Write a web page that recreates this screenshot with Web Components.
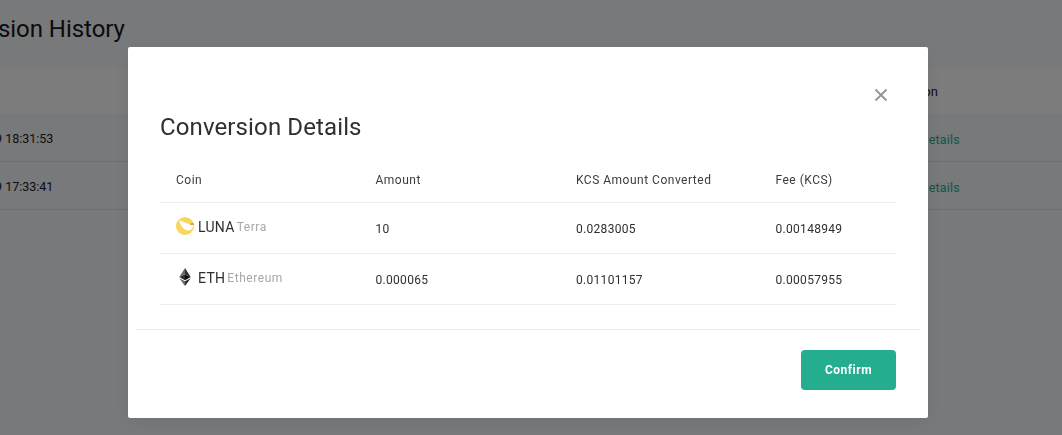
<!DOCTYPE html>
<html>
<head>
<meta charset="utf-8">
<style>
  html, body { margin: 0; height: 100%; background: #f7f8fa; overflow: hidden; }
  body { font-family: Roboto, "Liberation Sans", sans-serif; }
</style>
</head>
<body>
<history-page>
  <history-row slot="rows" time="9 18:31:53"></history-row>
  <history-row slot="rows" time="9 17:33:41"></history-row>
</history-page>

<modal-shade>
  <details-dialog heading="Conversion Details">
    <coin-row coin="LUNA" name="Terra" amount="10" kcs="0.0283005" fee="0.00148949">
      <svg slot="icon" width="18" height="18" viewBox="0 0 18 18">
        <circle cx="9" cy="9" r="9" fill="#f9d65c"/>
        <path d="M3.400 3.200C4 9 8.500 13.800 12.800 13.400 15.200 13 17 10.800 17.700 8.200 15.500 8.400 13.500 7.400 11 6.200 8.400 5 6 4.200 3.400 3.200Z" fill="#fff"/>
        <path d="M13.800 7.200 17 5.600 17.700 7.900C16.300 8.100 15 7.700 13.800 7.200Z" fill="#f2843c"/>
      </svg>
    </coin-row>
    <coin-row coin="ETH" name="Ethereum" amount="0.000065" kcs="0.01101157" fee="0.00057955">
      <svg slot="icon" width="18" height="18" viewBox="0 0 18 18">
        <path d="M9 0 3.300 9 9 6.600Z" fill="#6b6b6b"/>
        <path d="M9 0 14.700 9 9 6.600Z" fill="#333"/>
        <path d="M9 6.600 3.300 9 9 12.200Z" fill="#2c2c2c"/>
        <path d="M9 6.600 14.700 9 9 12.200Z" fill="#0d0d0d"/>
        <path d="M3.300 10.200 9 18V13.300Z" fill="#6b6b6b"/>
        <path d="M14.700 10.200 9 18V13.300Z" fill="#2c2c2c"/>
      </svg>
    </coin-row>
  </details-dialog>
</modal-shade>

<script>
  // page behind the shade; only the part in view is kept, the title is trimmed to it
  customElements.define('history-page', class HistoryPage extends HTMLElement {
    constructor() {
      super();
      this.attachShadow({mode: 'open'}).innerHTML = `
        <style>
          :host { display: block; width: 1062px; height: 435px; overflow: hidden; color: #14181c; }
          h1 {
            margin: 0; height: 68px; box-sizing: border-box; padding-top: 13px;
            margin-left: -2px; font-size: 24px; font-weight: 400; line-height: 32px;
            letter-spacing: -.05px; white-space: nowrap;
          }
          .head {
            height: 46px; background: #fff; display: flex; justify-content: flex-end;
            align-items: center; font-size: 13px; padding-right: 124px; letter-spacing: .1px; color: #22262a;
          }
        </style>
        <h1>sion History</h1>
        <div class="head">on</div>
        <slot name="rows"></slot>
      `;
    }
  });

  customElements.define('history-row', class HistoryRow extends HTMLElement {
    constructor() {
      super();
      this.attachShadow({mode: 'open'}).innerHTML = `
        <style>
          :host {
            display: flex; justify-content: space-between; align-items: center; height: 44px;
            padding-top: 3px; border-bottom: 1px solid #e2e2e2; font-size: 12.500px;
            white-space: nowrap;
          }
          .time { margin-left: -5px; color: #1a1e22; margin-bottom: 1px; }
          a { color: #24ae8f; margin-right: 102px; letter-spacing: .2px; }
        </style>
        <span class="time">${this.getAttribute('time')}</span>
        <a>etails</a>
      `;
    }
  });

  customElements.define('modal-shade', class ModalShade extends HTMLElement {
    constructor() {
      super();
      this.attachShadow({mode: 'open'}).innerHTML = `
        <style>
          :host {
            position: fixed; inset: 0; display: flex; justify-content: center; align-items: flex-start;
            background: rgba(0, 0, 1, .515);
          }
        </style>
        <slot></slot>
      `;
    }
  });

  customElements.define('details-dialog', class DetailsDialog extends HTMLElement {
    constructor() {
      super();
      this.attachShadow({mode: 'open'}).innerHTML = `
        <style>
          :host {
            display: block; width: 800px; height: 371px; margin-top: 47px; margin-left: -6px;
            background: #fff; border-radius: 2px; box-sizing: border-box; padding: 0 8px;
            box-shadow: 0 4px 24px rgba(0, 0, 0, .08);
            color: #2d2f33;
          }
          .close { display: flex; justify-content: flex-end; padding: 41px 32px 0 0; height: 14px; }
          .close svg { display: block; }
          .main { padding: 0 24px; }
          h2 {
            margin: 9px 0 0; font-size: 24px; line-height: 32px; font-weight: 400;
            letter-spacing: .12px; color: #2d2f33;
          }
          .head {
            display: grid; grid-template-columns: 199.500px 200.500px 199.500px 136.500px;
            margin-top: 14px; height: 45px; align-items: center;
            border-bottom: 1px solid #ececec;
            font-size: 12px; letter-spacing: .5px; color: #3a3c40;
          }
          .head span { padding-left: 16px; }
          footer {
            margin-top: 24px; border-top: 1px solid #ececec; display: flex; justify-content: flex-end;
            padding: 20px 24px 0;
          }
          button {
            width: 95px; height: 40px; border: 0; border-radius: 4px; background: #24ae8f; color: #fff;
            font: 700 12px Roboto, sans-serif; letter-spacing: .5px; padding: 0;
          }
        </style>
        <div class="close">
          <svg width="14" height="14" viewBox="0 0 14 14"><path d="M1.500 1.500l11 11M12.500 1.500l-11 11" stroke="#929497" stroke-width="1.800" fill="none"/></svg>
        </div>
        <div class="main">
          <h2>${this.getAttribute('heading')}</h2>
          <div class="head"><span>Coin</span><span>Amount</span><span>KCS Amount Converted</span><span>Fee (KCS)</span></div>
          <slot></slot>
        </div>
        <footer><button>Confirm</button></footer>
      `;
    }
  });

  customElements.define('coin-row', class CoinRow extends HTMLElement {
    constructor() {
      super();
      const a = n => this.getAttribute(n);
      this.attachShadow({mode: 'open'}).innerHTML = `
        <style>
          :host {
            display: grid; grid-template-columns: 199.500px 200.500px 199.500px 136.500px;
            height: 50px; border-bottom: 1px solid #ececec; align-items: center;
            font-size: 12px; letter-spacing: .3px; color: #2d2f33;
          }
          .c { padding-left: 16px; margin-top: 1px; }
          .coin { display: flex; align-items: center; gap: 4px; padding-left: 16px; margin-top: -4px; }
          .coin b { font-weight: 400; font-size: 14px; letter-spacing: .3px; padding-top: 2px; }
          .coin i { font-style: normal; color: #a6a7a9; letter-spacing: .55px; margin-left: -2px; padding-top: 2px; }
          ::slotted(svg) { display: block; }
        </style>
        <div class="coin"><slot name="icon"></slot><b>${a('coin')}</b><i>${a('name')}</i></div>
        <span class="c">${a('amount')}</span>
        <span class="c">${a('kcs')}</span>
        <span class="c">${a('fee')}</span>
      `;
    }
  });
</script>
</body>
</html>
